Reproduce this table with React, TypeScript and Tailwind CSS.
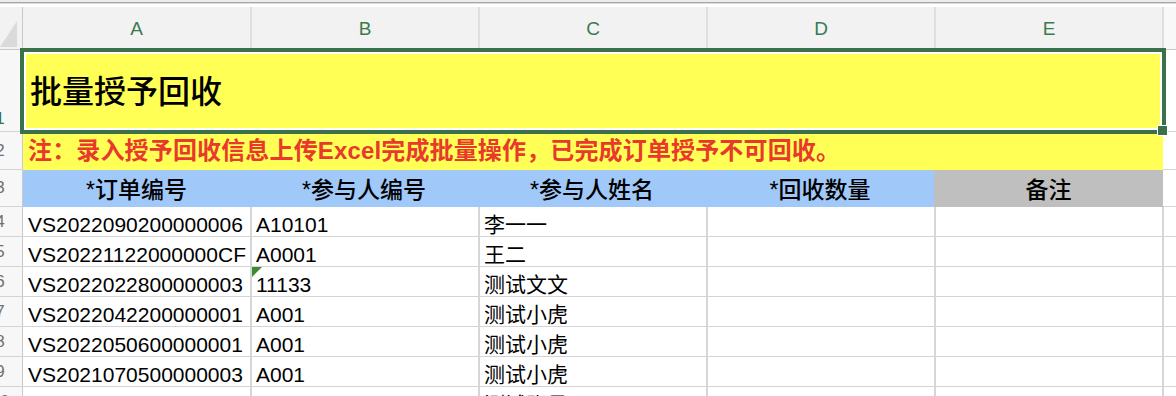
import React from "react";

const rows: { n: number; a: string; b: string; c: string; tri?: boolean }[] = [
  { n: 4, a: "VS2022090200000006", b: "A10101", c: "李一一" },
  { n: 5, a: "VS20221122000000CF", b: "A0001", c: "王二" },
  { n: 6, a: "VS2022022800000003", b: "11133", c: "测试文文", tri: true },
  { n: 7, a: "VS2022042200000001", b: "A001", c: "测试小虎" },
  { n: 8, a: "VS2022050600000001", b: "A001", c: "测试小虎" },
  { n: 9, a: "VS2021070500000003", b: "A001", c: "测试小虎" },
  { n: 10, a: "VS2022100300000001", b: "A00001", c: "测试账号01" },
];

function RowNum({ n, green, bottom }: { n: number; green?: boolean; bottom?: boolean }) {
  return (
    <div
      className={`w-[23px] shrink-0 overflow-hidden border-r border-[#c8c8c8] bg-[#f7f7f7] flex ${
        bottom ? "items-end pb-[2px]" : "items-center"
      }`}
    >
      <div
        className={`w-[44px] shrink-0 -ml-[22px] text-center text-[17px] leading-[20px] ${
          green ? "text-[#3a704a]" : "text-[#707070]"
        }`}
      >
        {n}
      </div>
    </div>
  );
}

export default function App() {
  const cell = "shrink-0 border-r-2 border-[#d6d6d6] flex items-start pt-[7px] pl-[4px] text-[21px] leading-[21px] text-black whitespace-nowrap overflow-hidden";
  return (
    <div className="relative w-[1176px] h-[396px] overflow-hidden bg-white font-['Liberation_Sans','Noto_Sans_CJK_SC',sans-serif]">
      {/* top strip */}
      <div className="h-[2px] bg-[#ececec]" />
      <div className="h-px bg-[#a6a6a6]" />
      <div className="h-px bg-[#dcdcdc]" />
      <div className="h-[3px] bg-white" />

      {/* column header */}
      <div className="flex h-[43px] border-b border-[#c8c8c8]">
        <div className="w-[23px] shrink-0 border-r border-[#c8c8c8] bg-[#f2f2f2] flex items-end">
          <svg width="19" height="40" viewBox="0 0 19 40">
            <polygon points="0,38 17,12 17,38" fill="#dadada" />
          </svg>
        </div>
        {["A", "B", "C", "D", "E"].map((l, i) => (
          <div
            key={l}
            className={`${i === 0 ? "w-[229px]" : "w-[228px]"} shrink-0 bg-[#f2f2f2] border-r-2 border-[#dedede] flex items-center justify-center pt-[3px] text-[19px] text-[#3a7a50]`}
          >
            {l}
          </div>
        ))}
        <div className="flex-1 bg-[#f8f8f8]" />
      </div>

      {/* row 1 */}
      <div className="flex h-[82px]">
        <div className="flex border-b border-[#d4d4d4]">
          <RowNum n={1} green bottom />
        </div>
        <div className="w-[1140px] shrink-0 bg-[#ffff55] flex items-center pl-[7px] pt-[2px] text-[32px] font-medium leading-none text-black">
          批量授予回收
        </div>
        <div className="flex-1 border-b border-[#d4d4d4]" />
      </div>

      {/* row 2 */}
      <div className="flex h-[38px]">
        <div className="flex border-b border-[#d4d4d4]">
          <RowNum n={2} />
        </div>
        <div className="w-[1140px] shrink-0 bg-[#ffff55] flex items-center pl-[5px] text-[24px] font-bold leading-none tracking-[0.15px] text-[#e8392c] whitespace-nowrap">
          注：录入授予回收信息上传Excel完成批量操作，已完成订单授予不可回收。
        </div>
        <div className="flex-1 border-b border-[#d4d4d4]" />
      </div>

      {/* row 3 */}
      <div className="flex h-[37px]">
        <div className="flex border-b border-[#d4d4d4]">
          <RowNum n={3} />
        </div>
        {["*订单编号", "*参与人编号", "*参与人姓名", "*回收数量"].map((t, i) => (
          <div
            key={t}
            className={`${i === 0 ? "w-[227px]" : "w-[228px]"} shrink-0 bg-[#a0c8f8] flex items-center justify-center pt-[3px] text-[23px] font-medium leading-none text-black`}
          >
            {t}
          </div>
        ))}
        <div className="w-[229px] shrink-0 bg-[#bfbfbf] flex items-center justify-center pt-[3px] text-[23px] font-medium leading-none text-black">
          备注
        </div>
        <div className="flex-1 border-b border-[#d4d4d4]" />
      </div>

      {/* data rows */}
      {rows.map((r) => (
        <div key={r.n} className="flex h-[30px] border-b border-[#d4d4d4]">
          <RowNum n={r.n} />
          <div className={`${cell} w-[229px] pl-[5px]`}>{r.a}</div>
          <div className={`${cell} w-[228px] relative`}>
            {r.tri && (
              <svg className="absolute left-0 top-0" width="10" height="10" viewBox="0 0 10 10">
                <polygon points="0,0 10,0 0,10" fill="#3d8a35" />
              </svg>
            )}
            {r.b}
          </div>
          <div className={`${cell} w-[228px]`}>{r.c}</div>
          <div className={`${cell} w-[228px]`} />
          <div className={`${cell} w-[228px]`} />
          <div className="flex-1" />
        </div>
      ))}

      {/* selection overlay */}
      <div className="absolute left-[20px] top-[48px] w-[1146px] h-[86px] border-4 border-[#3a704a] shadow-[inset_0_0_0_2px_white] pointer-events-none" />
      <div className="absolute left-[1157px] top-[125px] w-[11px] h-[11px] bg-[#3a704a] border border-white" />
    </div>
  );
}
